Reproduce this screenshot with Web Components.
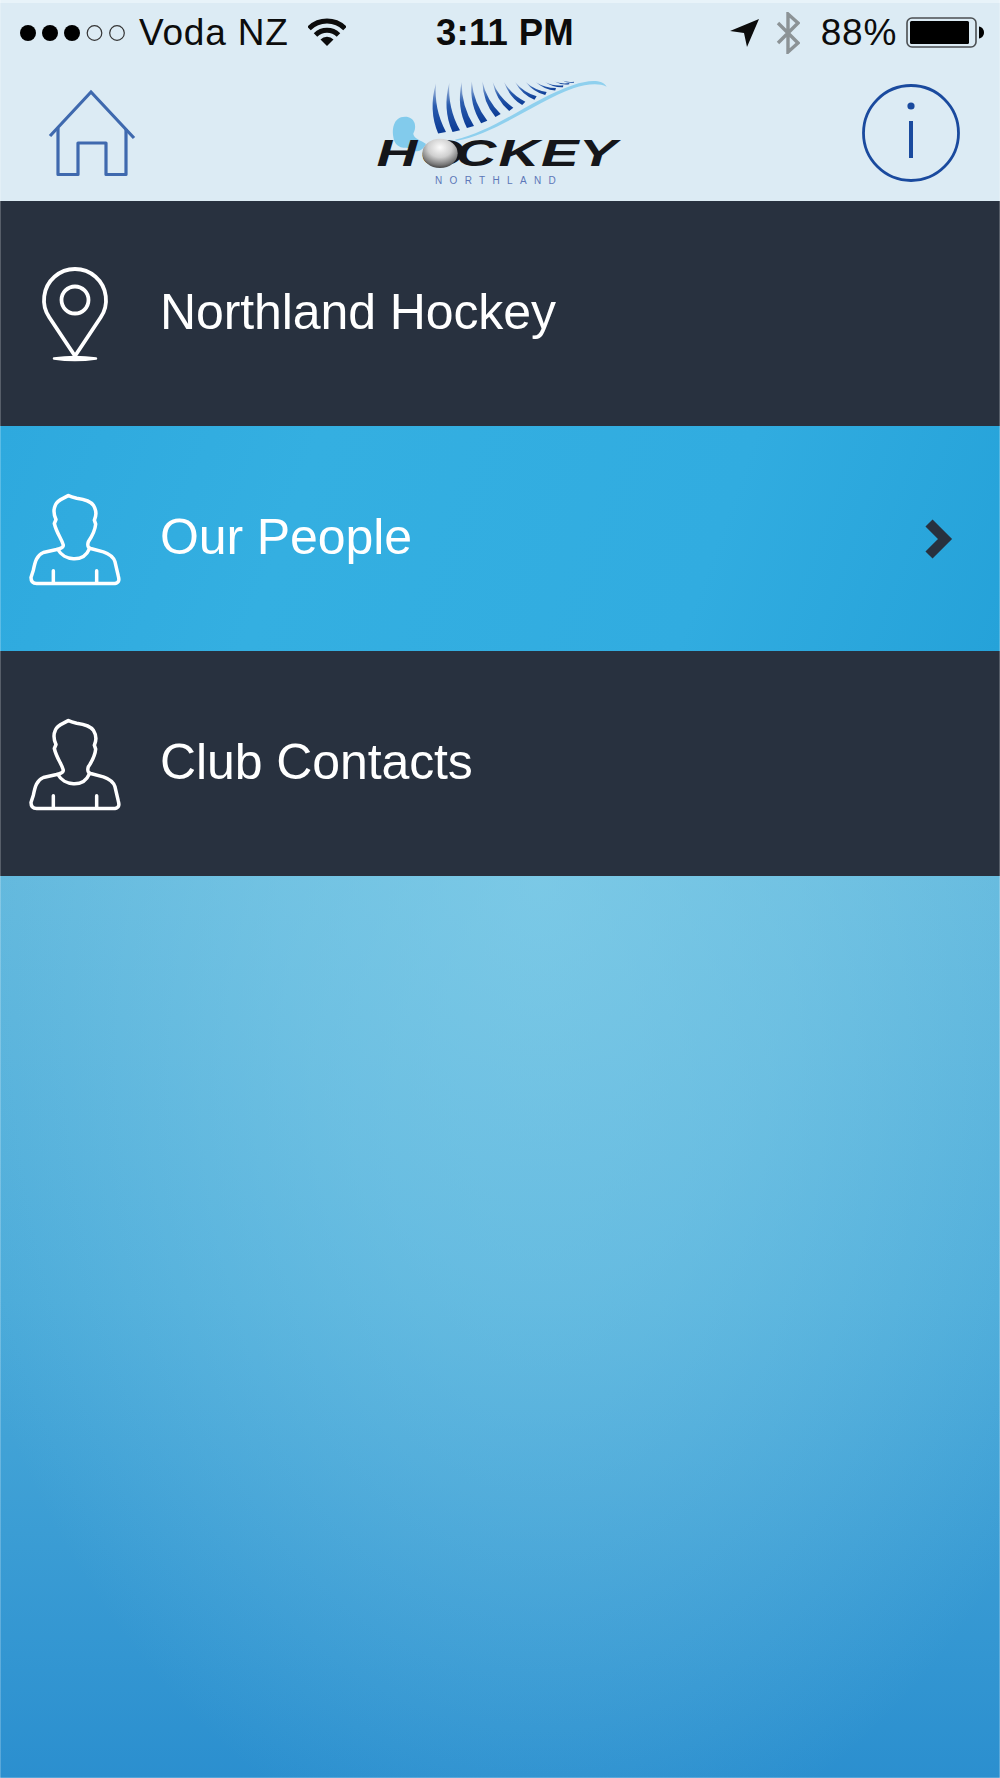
<!DOCTYPE html>
<html>
<head>
<meta charset="utf-8">
<title>Hockey Northland</title>
<style>
  html, body { margin: 0; padding: 0; }
  body { font-family: "Liberation Sans", Arial, sans-serif; }
</style>
</head>
<body>
<phone-screen>
  <app-header>
    <status-bar carrier="Voda NZ" time="3:11 PM" battery="88%"></status-bar>
  </app-header>
  <menu-row><app-icon slot="icon" name="pin"></app-icon>Northland Hockey</menu-row>
  <menu-row active><app-icon slot="icon" name="person"></app-icon>Our People</menu-row>
  <menu-row><app-icon slot="icon" name="person"></app-icon>Club Contacts</menu-row>
</phone-screen>

<script>
const ICONS = {
  pin: `
    <svg width="70" height="100" viewBox="40 262 70 100" fill="none" stroke="#fff" stroke-width="3.8">
      <path d="M75 354 L49.4 315.5 A31 31 0 1 1 100.6 315.5 Z" stroke-linejoin="round"/>
      <circle cx="75" cy="298" r="13.5"/>
      <path d="M54 356.500 Q75 353.500 96 356.500 Q75 359.500 54 356.500 Z" fill="#fff" stroke-width="2.500" stroke-linejoin="round"/>
    </svg>`,
  person: `
    <svg width="100" height="97" viewBox="75 60 300 290" fill="none" stroke="#fff" stroke-width="10.5" stroke-linejoin="round" stroke-linecap="round">
      <path d="M205 76 C190 86 172 88 166 105 C160 118 162 135 168 148 L163 160 C170 190 185 205 190 225 C190 235 178 235 170 238 L130 247 C110 255 105 275 100 300 L93 322 C93 335 100 340 110 340 L345 340 C358 338 358 328 355 318 L345 275 C340 258 325 250 310 245 L272 235 C262 232 262 225 265 215 C275 200 285 185 287 162 L283 150 C290 135 288 118 280 105 C270 90 245 86 230 84 C220 82 212 80 205 76 Z"/>
      <path d="M174 238 C190 270 250 280 268 236"/>
      <path d="M160 302 V338 M290 302 V338"/>
    </svg>`,
  home: `
    <svg width="92" height="92" viewBox="46 86 92 92" fill="none" stroke="#3f69ae" stroke-width="3.2">
      <path d="M50 135 L91 91 L134 137"/>
      <path d="M58 127 V173.5 H78 V142 H106 V173.5 H126 V128" stroke-linejoin="round"/>
    </svg>`,
  info: `
    <svg width="100" height="100" viewBox="0 0 100 100" fill="none" stroke="#1a4a9e" stroke-width="2.8">
      <circle cx="50" cy="50" r="47.5"/>
      <circle cx="50" cy="23" r="3.6" fill="#1a4a9e" stroke="none"/>
      <path d="M50 38 V75" stroke-width="4"/>
    </svg>`,
};

class AppIcon extends HTMLElement {
  constructor() {
    super();
    this.attachShadow({ mode: "open" });
    this.shadowRoot.innerHTML = `
      <style>
        :host { display: inline-flex; }
        svg { display: block; }
      </style>
      ${ICONS[this.getAttribute("name")] || ""}
    `;
  }
}

class StatusBar extends HTMLElement {
  constructor() {
    super();
    this.attachShadow({ mode: "open" });
    this.shadowRoot.innerHTML = `
      <style>
        :host {
          display: grid;
          grid-template-columns: 1fr auto 1fr;
          align-items: center;
          height: 59px;
          padding: 0 16px 0 20px;
          box-sizing: border-box;
          font-size: 37px;
          color: #0c0c0c;
        }
        .group { display: flex; align-items: center; }
        .right { justify-content: flex-end; }
        .time { font-weight: bold; font-size: 36.500px; letter-spacing: 0.300px; margin-left: 6px; }
        .carrier { margin-left: 13px; letter-spacing: 0.800px; }
        .wifi { margin-left: 19px; margin-top: -2px; }
        .arrow { margin-right: 17px; }
        .bt { margin-right: 21px; }
        .pct { margin-right: 9px; letter-spacing: 0.700px; }
        svg { display: block; }
      </style>
      <div class="group">
        <svg width="106" height="18" viewBox="0 0 106 18">
          <circle cx="8" cy="9" r="8"/>
          <circle cx="30" cy="9" r="8"/>
          <circle cx="52" cy="9" r="8"/>
          <circle cx="74.500" cy="9" r="7.300" fill="none" stroke="#333" stroke-width="1.200"/>
          <circle cx="97" cy="9" r="7.300" fill="none" stroke="#333" stroke-width="1.200"/>
        </svg>
        <span class="carrier">${this.getAttribute("carrier")}</span>
        <svg class="wifi" width="38" height="30" viewBox="0 0 38 30" fill="none" stroke="#0c0c0c" stroke-width="5">
          <path d="M1 11.500 A25.500 25.500 0 0 1 37 11.500"/>
          <path d="M7.500 18 A16.500 16.500 0 0 1 30.500 18"/>
          <path d="M12.500 22.500 L19 29 L25.500 22.500 A9 9 0 0 0 12.500 22.500 Z" fill="#0c0c0c" stroke="none"/>
        </svg>
      </div>
      <div class="time">${this.getAttribute("time")}</div>
      <div class="group right">
        <svg class="arrow" width="30" height="30" viewBox="727 18 30 30">
          <path d="M728 31 L757 19 L745 47 L742 33 Z" fill="#0c0c0c"/>
        </svg>
        <svg class="bt" width="24" height="42" viewBox="775 11 24 42" fill="none" stroke="#8c9396" stroke-width="3.400">
          <path d="M777 22 L797 42 L787 51 V13 L797 22 L777 42"/>
        </svg>
        <span class="pct">${this.getAttribute("battery")}</span>
        <svg width="78" height="31" viewBox="0 0 78 31">
          <rect x="1" y="1" width="69" height="29" rx="5" fill="none" stroke="#4b4f52" stroke-width="1.600"/>
          <rect x="4" y="4" width="59" height="23" rx="1.500"/>
          <path d="M73 9.500 C76 10 78 12.500 78 15.500 C78 18.500 76 21 73 21.500 Z"/>
        </svg>
      </div>
    `;
  }
}

class HockeyLogo extends HTMLElement {
  constructor() {
    super();
    this.attachShadow({ mode: "open" });
    // fern fronds as crescents: base x, base y, tip x, tip y, base thickness
    const fronds = [
      [258, 186, 228, 40, 24], [300, 181, 268, 38, 23], [342, 168, 305, 36, 22],
      [382, 152, 335, 34, 20], [422, 132, 367, 34, 18], [460, 113, 398, 36, 16],
      [496, 95, 432, 36, 14], [530, 79, 465, 36, 12], [560, 66, 497, 36, 10],
      [588, 54, 527, 36, 8], [610, 46, 555, 36, 6], [628, 39, 582, 34, 4], [642, 35, 606, 31, 3],
    ];
    const paths = fronds.map(([bx, by, tx, ty, w]) => {
      const len = Math.hypot(bx - tx, by - ty);
      const dx = (bx - tx) / len, dy = (by - ty) / len;
      const px = -dy, py = dx;
      const mx = (bx + tx) / 2, my = (by + ty) / 2;
      const bulge = len * 0.15;
      const inner = `${(mx + px * bulge).toFixed(1)} ${(my + py * bulge).toFixed(1)}`;
      const outer = `${(mx + px * (bulge + w * 0.7)).toFixed(1)} ${(my + py * (bulge + w * 0.7)).toFixed(1)}`;
      const lx = (bx + px * w).toFixed(1), ly = (by + py * w).toFixed(1);
      return `<path d="M${bx} ${by} Q${inner} ${tx} ${ty} Q${outer} ${lx} ${ly} Z"/>`;
    }).join("");

    this.shadowRoot.innerHTML = `
      <style>
        :host { display: block; width: 270px; height: 120px; }
        svg { display: block; }
        text { font-family: "Liberation Sans", Arial, sans-serif; }
      </style>
      <svg width="270" height="120" viewBox="0 0 810 360">
        <defs>
          <radialGradient id="ball" cx="0.5" cy="0.3" r="0.75">
            <stop offset="0" stop-color="#fbfbfb"/>
            <stop offset="0.45" stop-color="#cfcfcf"/>
            <stop offset="0.8" stop-color="#767676"/>
            <stop offset="1" stop-color="#2d2d2d"/>
          </radialGradient>
          <linearGradient id="frond" x1="0" y1="0" x2="0" y2="1">
            <stop offset="0" stop-color="#b4c8e2"/>
            <stop offset="0.45" stop-color="#2a5cae"/>
            <stop offset="1" stop-color="#0a3a94"/>
          </linearGradient>
        </defs>
        <path d="M104 215 C92 180 100 140 135 140 C165 140 172 170 160 190 C158 205 185 212 198 222 C190 238 175 248 165 242 C150 225 120 245 104 215 Z" fill="#82cbec"/>
        <g fill="url(#frond)">${paths}</g>
        <path d="M285 209 C400 185 520 85 640 45 C680 32 725 25 740 50 C715 38 680 42 640 55 C530 95 400 195 290 212 Z" fill="#8fd0ee"/>
        <g transform="scale(1.5 1)" font-size="113" font-weight="bold" font-style="italic" fill="#15161a">
          <text x="33 120 191 277 362 438" y="287">HOCKEY</text>
        </g>
        <ellipse cx="240" cy="250" rx="53" ry="44" fill="url(#ball)"/>
        <text x="225" y="343" font-size="30" textLength="362" fill="#5d77b8">NORTHLAND</text>
      </svg>
    `;
  }
}

class AppHeader extends HTMLElement {
  constructor() {
    super();
    this.attachShadow({ mode: "open" });
    this.shadowRoot.innerHTML = `
      <style>
        :host {
          display: block;
          height: 201px;
          box-sizing: border-box;
          background: #dcebf4;
          border-top: 3px solid #e8f3f9;
        }
        nav {
          display: flex;
          align-items: center;
          justify-content: space-between;
          height: 139px;
          padding: 2px 39px 0 46px;
          box-sizing: border-box;
        }
        hockey-logo { margin-right: 9px; margin-bottom: 5px; }
        slot { display: block; }
      </style>
      <slot></slot>
      <nav>
        <app-icon name="home"></app-icon>
        <hockey-logo></hockey-logo>
        <app-icon name="info"></app-icon>
      </nav>
    `;
  }
}

class MenuRow extends HTMLElement {
  constructor() {
    super();
    this.attachShadow({ mode: "open" });
    const active = this.hasAttribute("active");
    this.shadowRoot.innerHTML = `
      <style>
        :host {
          display: flex;
          align-items: center;
          height: 225px;
          background: #28313f;
          color: #fff;
          font-size: 50px;
          letter-spacing: -0.100px;
        }
        :host([active]) {
          background: linear-gradient(110deg, #2ea9de 0%, #34afe1 30%, #31ace0 70%, #25a2d9 100%);
        }
        .icon { width: 150px; flex: none; display: flex; justify-content: center; }
        .label { flex: 1; padding: 0 0 3px 10px; }
        .chevron { margin-right: 46px; display: block; }
      </style>
      <div class="icon"><slot name="icon"></slot></div>
      <div class="label"><slot></slot></div>
      ${active ? `
        <svg class="chevron" width="30" height="44" viewBox="0 0 30 44" fill="none" stroke="#28313f" stroke-width="10">
          <path d="M5 6 L21 22 L5 38"/>
        </svg>` : ""}
    `;
  }
}

class PhoneScreen extends HTMLElement {
  constructor() {
    super();
    this.attachShadow({ mode: "open" });
    this.shadowRoot.innerHTML = `
      <style>
        :host {
          display: block;
          position: relative;
          width: 1000px;
          height: 1778px;
          overflow: hidden;
          background:
            radial-gradient(ellipse 640px 1000px at 540px 880px, rgba(140, 212, 236, 0.62) 0%, rgba(140, 212, 236, 0.42) 40%, rgba(140, 212, 236, 0) 100%),
            linear-gradient(180deg, #5fb6dc 875px, #4aaad9 1300px, #2b8fcf 1778px);
        }
        :host::after {
          content: "";
          position: absolute;
          inset: 0;
          box-shadow: inset 1px 0 0 rgba(255, 255, 255, 0.22), inset -1px 0 0 rgba(255, 255, 255, 0.22), inset 0 -1px 0 rgba(255, 255, 255, 0.2);
          pointer-events: none;
        }
      </style>
      <slot></slot>
    `;
  }
}

customElements.define("app-icon", AppIcon);
customElements.define("status-bar", StatusBar);
customElements.define("hockey-logo", HockeyLogo);
customElements.define("app-header", AppHeader);
customElements.define("menu-row", MenuRow);
customElements.define("phone-screen", PhoneScreen);
</script>
</body>
</html>
